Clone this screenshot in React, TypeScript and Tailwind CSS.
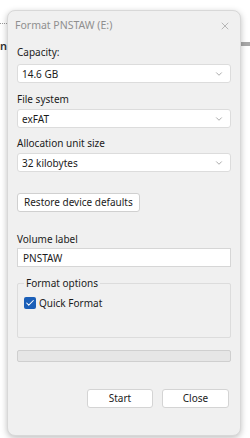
import { ChevronDown, X, Check } from 'lucide-react';

const font = { fontFamily: '"Noto Sans", "Open Sans", sans-serif' };

function Select({ value }: { value: string }) {
  return (
    <div className="flex h-[19px] w-[214px] items-center justify-between rounded-[3px] border border-[#dcdcdc] bg-white pl-[4px] pr-[6px]">
      <span className="text-[10px] leading-none text-[#1b1b1b]">{value}</span>
      <ChevronDown size={10} strokeWidth={1.5} className="text-[#777]" />
    </div>
  );
}

function Label({ children }: { children: string }) {
  return <p className="text-[10px] leading-[14px] text-[#1b1b1b]">{children}</p>;
}

export default function App() {
  return (
    <div className="relative h-[438px] w-[250px] overflow-hidden bg-white" style={font}>
      {/* window behind the dialog */}
      <div className="absolute left-0 top-[23px] w-[7px] border-t border-dotted border-[#999]" />
      <div className="absolute left-0 top-[38px] text-[11px] font-semibold text-[#333]">n</div>
      <div className="absolute right-0 top-[42px] h-[4px] w-[9px] bg-[#a8a8a8]" />

      {/* Dialog */}
      <div className="relative ml-[7px] mt-[10px] flex h-[426px] w-[234px] flex-col rounded-[8px] border border-[#d8d8d8] bg-[#f0f0f0] shadow-[0_2px_6px_rgba(0,0,0,0.25)]">
        {/* Title bar */}
        <div className="flex h-[28px] items-center justify-between pl-[7px] pr-[9px] pt-[2px]">
          <span className="text-[10.5px] text-[#8f8f8f]">Format PNSTAW (E:)</span>
          <X size={12} strokeWidth={1.2} className="text-[#8f8f8f]" />
        </div>

        <div className="flex flex-1 flex-col px-[9px]">
          <div className="mt-[6px]">
            <Label>Capacity:</Label>
          </div>
          <div className="mt-[5px]">
            <Select value="14.6 GB" />
          </div>

          <div className="mt-[9px]">
            <Label>File system</Label>
          </div>
          <div className="mt-[3px]">
            <Select value="exFAT" />
          </div>

          <div className="mt-[8px]">
            <Label>Allocation unit size</Label>
          </div>
          <div className="mt-[3px]">
            <Select value="32 kilobytes" />
          </div>

          <div className="mt-[21px]">
            <button className="flex h-[19px] items-center rounded-[3px] border border-[#d0d0d0] bg-white px-[6px] text-[10px] text-[#1b1b1b]">
              Restore device defaults
            </button>
          </div>

          <div className="mt-[20px]">
            <Label>Volume label</Label>
          </div>
          <div className="mt-[2px] flex h-[19px] w-[214px] items-center border border-[#d6d6d6] bg-white pl-[5px]">
            <span className="text-[10px] leading-none text-[#1b1b1b]">PNSTAW</span>
          </div>

          {/* Format options group */}
          <div className="relative mt-[16px] h-[55px] w-[214px] rounded-[2px] border border-[#dcdcdc]">
            <span className="absolute left-[6px] top-[-8px] bg-[#f0f0f0] px-[2px] text-[10px] leading-[14px] text-[#1b1b1b]">
              Format options
            </span>
            <div className="ml-[6px] mt-[13px] flex items-center gap-[3px]">
              <div className="flex h-[12px] w-[12px] items-center justify-center rounded-[2px] bg-[#1b5fb8]">
                <Check size={10} strokeWidth={2.5} className="text-white" />
              </div>
              <span className="text-[10px] leading-none text-[#1b1b1b]">Quick Format</span>
            </div>
          </div>

          {/* Progress bar */}
          <div className="mt-[12px] h-[12px] w-[214px] rounded-[2px] border border-[#cfcfcf] bg-[#e6e6e6]" />

          {/* Buttons */}
          <div className="mt-[27px] flex justify-end gap-[9px] pr-[2px]">
            <button className="flex h-[19px] w-[66px] items-center justify-center rounded-[3px] border border-[#d4d4d4] bg-white text-[10px] text-[#1b1b1b]">
              Start
            </button>
            <button className="flex h-[19px] w-[67px] items-center justify-center rounded-[3px] border border-[#d4d4d4] bg-white text-[10px] text-[#1b1b1b]">
              Close
            </button>
          </div>
        </div>
      </div>
    </div>
  );
}
